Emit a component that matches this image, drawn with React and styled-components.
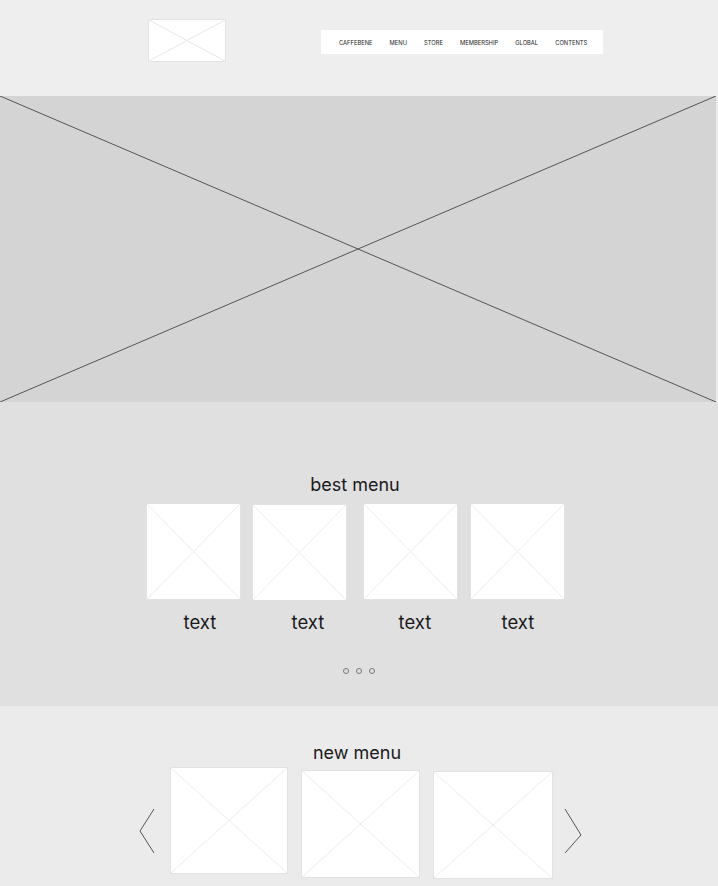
import React from "react";
import styled, { createGlobalStyle } from "styled-components";

const Global = createGlobalStyle`
  html, body { margin: 0; padding: 0; background: #ebebeb; }
  body { font-family: Inter, "Noto Sans", sans-serif; color: #1a1a1a; }
  * { box-sizing: border-box; }
`;

const Page = styled.div`
  width: 718px;
  display: flex;
  flex-direction: column;
`;

const Header = styled.header`
  height: 96px;
  background: #eeeeee;
  display: flex;
  align-items: flex-start;
  padding-left: 148px;
`;

const Logo = styled.div`
  margin-top: 19px;
  width: 78px;
  height: 43px;
  border-radius: 2px;
  overflow: hidden;
`;

const Nav = styled.nav`
  margin-top: 30px;
  margin-left: 95px;
  width: 282px;
  height: 24px;
  background: #ffffff;
  display: flex;
  align-items: center;
  padding-left: 18px;
  padding-top: 1px;
  gap: 17px;
`;

const NavItem = styled.span`
  font-family: Inter, sans-serif;
  font-weight: 400;
  font-size: 5.8px;
  color: #222;
  white-space: nowrap;
`;

const Hero = styled.div`
  width: 716px;
  height: 306px;
  background: #d4d4d4;
`;

const PhBox = styled.div`
  width: 100%;
  height: 100%;
  background: ${(p) => p.$bg};
  border: ${(p) => (p.$border ? "1px solid #e2e2e2" : "none")};
  & svg { display: block; width: 100%; height: 100%; }
`;

const Placeholder = ({ bg = "#fff", line = "#ececec", border = true }) => (
  <PhBox $bg={bg} $border={border}>
    <svg viewBox="0 0 100 100" preserveAspectRatio="none">
      <line x1="0" y1="0" x2="100" y2="100" stroke={line} strokeWidth="1" vectorEffect="non-scaling-stroke" />
      <line x1="100" y1="0" x2="0" y2="100" stroke={line} strokeWidth="1" vectorEffect="non-scaling-stroke" />
    </svg>
  </PhBox>
);

const Best = styled.section`
  height: 304px;
  background: #e0e0e0;
  display: flex;
  flex-direction: column;
  align-items: center;
  padding-top: 72px;
`;

const Title = styled.h2`
  margin: 0;
  font-family: Inter, sans-serif;
  font-weight: 400;
  font-size: 18px;
  line-height: 22px;
  color: #1a1a1a;
  transform: translateX(${(p) => p.$dx || 0}px);
`;

const BestRow = styled.div`
  margin-top: 7px;
  display: flex;
  align-items: flex-start;
  padding-right: 8px;
`;

const BestItem = styled.div`
  margin-left: ${(p) => p.$gap}px;
  width: 94px;
  display: flex;
  flex-direction: column;
  align-items: center;
`;

const Thumb = styled.div`
  width: ${(p) => p.$w}px;
  height: ${(p) => p.$h}px;
  margin-top: ${(p) => p.$dy || 0}px;
`;

const Label = styled.span`
  margin-top: ${(p) => 11 - (p.$dy || 0)}px;
  font-size: 18.5px;
  line-height: 22px;
  color: #1a1a1a;
  transform: translateX(${(p) => p.$dx}px);
`;

const Dots = styled.div`
  margin-top: 35px;
  display: flex;
  gap: 7px;
`;

const Dot = styled.span`
  width: 6px;
  height: 6px;
  border-radius: 50%;
  border: 1px solid #777;
`;

const NewSection = styled.section`
  height: 180px;
  background: #ebebeb;
  display: flex;
  flex-direction: column;
  align-items: center;
  padding-top: 36px;
  overflow: hidden;
`;

const NewRow = styled.div`
  margin-top: 3px;
  display: flex;
  align-items: flex-start;
  padding-left: 3px;
`;

const NewItem = styled.div`
  margin-left: ${(p) => p.$gap}px;
`;

const Arrow = styled.svg`
  margin-left: ${(p) => p.$gap || 0}px;
  margin-top: 41px;
  width: 18px;
  height: 46px;
  flex-shrink: 0;
`;

const bestItems = [
  { gap: 0, dy: 0, dx: 7 },
  { gap: 12, dy: 1, dx: 9 },
  { gap: 17, dy: 0, dx: 5 },
  { gap: 13, dy: 0, dx: 1 },
];

const newItems = [
  { gap: 13, dy: 0, w: 118, h: 107 },
  { gap: 13, dy: 3, w: 119, h: 108 },
  { gap: 13, dy: 4, w: 120, h: 108 },
];

export default function App() {
  const nav = ["CAFFEBENE", "MENU", "STORE", "MEMBERSHIP", "GLOBAL", "CONTENTS"];
  return (
    <Page>
      <Global />
      <Header>
        <Logo>
          <Placeholder line="#e6e6e6" />
        </Logo>
        <Nav>
          {nav.map((n) => (
            <NavItem key={n}>{n}</NavItem>
          ))}
        </Nav>
      </Header>
      <Hero>
        <Placeholder bg="#d4d4d4" line="#555" border={false} />
      </Hero>
      <Best>
        <Title $dx={-4}>best menu</Title>
        <BestRow>
          {bestItems.map((it, i) => (
            <BestItem key={i} $gap={it.gap}>
              <Thumb $w={95} $h={97} $dy={it.dy}>
                <Placeholder />
              </Thumb>
              <Label $dx={it.dx} $dy={it.dy}>text</Label>
            </BestItem>
          ))}
        </BestRow>
        <Dots>
          <Dot />
          <Dot />
          <Dot />
        </Dots>
      </Best>
      <NewSection>
        <Title $dx={-2}>new menu</Title>
        <NewRow>
          <Arrow viewBox="0 0 18 46">
            <polyline points="15,1 1,23 15,45" fill="none" stroke="#555" strokeWidth="1" />
          </Arrow>
          {newItems.map((it, i) => (
            <NewItem key={i} $gap={it.gap}>
              <Thumb $w={it.w} $h={it.h} $dy={it.dy}>
                <Placeholder />
              </Thumb>
            </NewItem>
          ))}
          <Arrow viewBox="0 0 18 46" $gap={11}>
            <polyline points="1,1 17,27 1,45" fill="none" stroke="#555" strokeWidth="1" />
          </Arrow>
        </NewRow>
      </NewSection>
    </Page>
  );
}
